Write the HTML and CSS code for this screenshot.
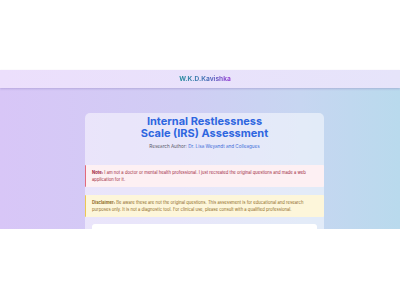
FILE: index.html
```html
<!DOCTYPE html>
<html lang="en">
<head>
<meta charset="utf-8">
<title>Internal Restlessness Scale (IRS) Assessment</title>
<link rel="stylesheet" href="styles.css">
</head>
<body>
<div class="top-blank"></div>
<header class="site-header"><span class="brand">W.K.D.Kavishka</span></header>
<main class="stage">
  <section class="card">
    <h1 class="title">Internal Restlessness<br>Scale (IRS) Assessment</h1>
    <p class="author">Research Author: <span class="author-name">Dr. Lisa Weyandt and Colleagues</span></p>
    <div class="notice notice-note"><strong>Note:</strong> I am not a doctor or mental health professional. I just recreated the original questions and made a web application for it.</div>
    <div class="notice notice-disclaimer"><strong>Disclaimer:</strong> Be aware these are not the original questions. This assessment is for educational and research purposes only. It is not a diagnostic tool. For clinical use, please consult with a qualified professional.</div>
    <div class="panel"></div>
  </section>
</main>
</body>
</html>
```
FILE: styles.css
```css
* { box-sizing: border-box; }
html, body { margin: 0; padding: 0; background: #ffffff; }
body { font-family: Inter, "Noto Sans", sans-serif; }

.top-blank { height: 70px; background: #ffffff; }

.site-header {
  height: 18px;
  display: flex;
  align-items: center;
  justify-content: center;
  padding-left: 10px;
  background: linear-gradient(90deg, #ecdffc, #e9e2fb 50%, #e6e4fa);
  box-shadow: 0 1px 2px rgba(120, 110, 170, 0.35);
  position: relative;
  z-index: 1;
}
.brand {
  font-size: 6.6px;
  font-weight: 700;
  background: linear-gradient(90deg, #1f8a9a, #4b6fb8 55%, #9b3fd6);
  -webkit-background-clip: text;
  background-clip: text;
  color: transparent;
}

.stage {
  height: 141px;
  overflow: hidden;
  padding: 25px 0 0 85px;
  background: linear-gradient(90deg, #d8c6f7 0%, #d0cdf4 45%, #c7d6f1 75%, #b9daed 100%);
}

.card {
  width: 239px;
  border-radius: 5px;
  background: rgba(255, 255, 255, 0.5);
  padding-top: 2px;
  padding-bottom: 10px;
}

.title {
  margin: 0;
  text-align: center;
  font-size: 11px;
  line-height: 12px;
  font-weight: 700;
  color: #2e66e0;
}

.author {
  margin: 4px 0 0;
  text-align: center;
  font-size: 4.6px;
  line-height: 7px;
  color: #5a5a6a;
}
.author-name { color: #3d6cd8; }

.notice {
  font-size: 4.2px;
  line-height: 7.5px;
  padding: 3.5px 6px;
  border-left: 1px solid;
  border-radius: 1px;
}
.notice-note {
  margin-top: 15px;
  background: #fdf0f3;
  border-left-color: #e26b7c;
  color: #a0263d;
}
.notice-disclaimer {
  margin-top: 8px;
  background: #fdf6da;
  border-left-color: #ecc654;
  color: #8d6b1e;
}

.panel {
  margin: 7px 7px 0;
  height: 40px;
  background: #ffffff;
  border-radius: 3px;
}
```
